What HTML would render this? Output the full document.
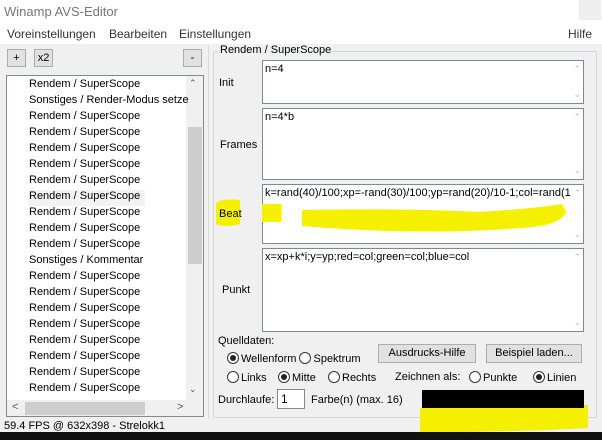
<!DOCTYPE html>
<html><head><meta charset="utf-8"><style>
*{box-sizing:border-box;margin:0;padding:0}
body{width:602px;height:440px;overflow:hidden;background:#f0f0f0;font-family:"Liberation Sans",sans-serif;font-size:11px;color:#000;position:relative}
.a{position:absolute}
.btn{position:absolute;background:#e1e1e1;border:1px solid #adadad;text-align:center;font-size:11px}
.ta{position:absolute;background:#fff;border:1px solid #828790;padding:2px 2px;font-size:11px;white-space:nowrap;overflow:hidden}
.sb{position:absolute;right:2px;top:3px;color:#c0c0c0;font-size:9px}
.sb2{position:absolute;right:2px;bottom:3px;color:#c0c0c0;font-size:9px}
.lbl{position:absolute;font-size:11px}
.item{position:absolute;left:29px;font-size:11px;white-space:nowrap}
.r{display:inline-block;width:12px;height:12px;border:1px solid #333;border-radius:50%;vertical-align:-2px;margin-right:2px;position:relative;background:#fff}
.r.on:after{content:"";position:absolute;left:2px;top:2px;width:6px;height:6px;border-radius:50%;background:#222}
</style></head><body>
<div class="a" style="left:0;top:0;width:602px;height:44px;background:#fff"></div>
<div class="a" style="left:4px;top:4px;font-size:13px;color:#777">Winamp AVS-Editor</div>
<div class="a" style="left:579px;top:0;width:22px;height:20px;background:#eee"></div>
<div class="a" style="left:7px;top:27px;font-size:12px;color:#333">Voreinstellungen</div>
<div class="a" style="left:109px;top:27px;font-size:12px;color:#333">Bearbeiten</div>
<div class="a" style="left:179px;top:27px;font-size:12px;color:#333">Einstellungen</div>
<div class="a" style="left:568px;top:27px;font-size:12px;color:#333">Hilfe</div>

<div class="btn" style="left:7px;top:49px;width:19px;height:18px;line-height:16px">+</div>
<div class="btn" style="left:34px;top:49px;width:19px;height:18px;line-height:16px">x2</div>
<div class="btn" style="left:183px;top:49px;width:19px;height:18px;line-height:16px">-</div>

<div class="a" style="left:6px;top:75px;width:198px;height:342px;background:#fff;border:1px solid #828790;overflow:hidden">
<div class="a" style="left:179px;top:0;width:17px;height:324px;background:#f0f0f0"></div>
<div class="a" style="left:181px;top:51px;width:14px;height:137px;background:#cdcdcd"></div>
<div class="a" style="left:182px;top:2px;font-size:9px;color:#555">&#8963;</div>
<div class="a" style="left:182px;top:308px;font-size:9px;color:#555">&#8964;</div>
<div class="a" style="left:0;top:324px;width:196px;height:17px;background:#f0f0f0"></div>
<div class="a" style="left:18px;top:326px;width:120px;height:13px;background:#cdcdcd"></div>
<div class="a" style="left:5px;top:325px;color:#555">&lt;</div>
<div class="a" style="left:170px;top:325px;color:#555">&gt;</div>
<div class="a" style="left:22px;top:114px;width:116px;height:16px;background:#f3f3f3"></div>
</div>
<div class="a" style="left:6px;top:76px">
<div class="item" style="top:2px;left:23px">Rendem / SuperScope</div>
<div class="item" style="top:18px;left:23px">Sonstiges / Render-Modus setze</div>
<div class="item" style="top:34px;left:23px">Rendem / SuperScope</div>
<div class="item" style="top:50px;left:23px">Rendem / SuperScope</div>
<div class="item" style="top:66px;left:23px">Rendem / SuperScope</div>
<div class="item" style="top:82px;left:23px">Rendem / SuperScope</div>
<div class="item" style="top:98px;left:23px">Rendem / SuperScope</div>
<div class="item" style="top:114px;left:23px">Rendem / SuperScope</div>
<div class="item" style="top:130px;left:23px">Rendem / SuperScope</div>
<div class="item" style="top:146px;left:23px">Rendem / SuperScope</div>
<div class="item" style="top:162px;left:23px">Rendem / SuperScope</div>
<div class="item" style="top:178px;left:23px">Sonstiges / Kommentar</div>
<div class="item" style="top:194px;left:23px">Rendem / SuperScope</div>
<div class="item" style="top:210px;left:23px">Rendem / SuperScope</div>
<div class="item" style="top:226px;left:23px">Rendem / SuperScope</div>
<div class="item" style="top:242px;left:23px">Rendem / SuperScope</div>
<div class="item" style="top:258px;left:23px">Rendem / SuperScope</div>
<div class="item" style="top:274px;left:23px">Rendem / SuperScope</div>
<div class="item" style="top:290px;left:23px">Rendem / SuperScope</div>
<div class="item" style="top:306px;left:23px">Rendem / SuperScope</div>
</div>
<div class="a" style="left:208px;top:46px;width:1px;height:372px;background:#d8d8d8"></div>
<div class="a" style="left:4px;top:420px;font-size:11px">59.4 FPS @ 632x398 - Strelokk1</div>
<div class="a" style="left:0;top:432px;width:602px;height:8px;background:#111"></div>

<div class="a" style="left:213px;top:51px;width:384px;height:367px;border:1px solid #d5d5d5;border-radius:2px"></div>
<div class="a" style="left:218px;top:44px;background:#f0f0f0;padding:0 2px;font-size:11px">Rendem / SuperScope</div>

<div class="lbl" style="left:219px;top:77px">Init</div>
<div class="ta" style="left:262px;top:60px;width:322px;height:44px">n=4<span class="sb">&#8963;</span><span class="sb2">&#8964;</span></div>
<div class="lbl" style="left:220px;top:139px">Frames</div>
<div class="ta" style="left:262px;top:108px;width:322px;height:72px">n=4*b<span class="sb">&#8963;</span><span class="sb2">&#8964;</span></div>
<div class="ta" style="left:262px;top:184px;width:322px;height:60px">k=rand(40)/100;xp=-rand(30)/100;yp=rand(20)/10-1;col=rand(1<span class="sb">&#8963;</span><span class="sb2">&#8964;</span></div>
<div class="ta" style="left:262px;top:248px;width:322px;height:84px">x=xp+k*i;y=yp;red=col;green=col;blue=col<span class="sb">&#8963;</span><span class="sb2">&#8964;</span></div>
<div class="lbl" style="left:222px;top:284px">Punkt</div>

<svg class="a" style="left:0;top:0" width="602" height="440">
<path d="M216 203 Q222 198 240 200 L240 224 Q225 228 216 224 Z" fill="#f4f000"/>
<path d="M302 210 Q400 208 480 212 Q540 208 562 204 L566 212 Q560 226 520 228 Q420 236 302 226 Z" fill="#f4f000"/>
<path d="M262 204 L281 204 L281 222 L262 222 Z" fill="#f4f000"/>
<path d="M420 408 Q500 404 588 405 L588 428 Q520 432 420 432 Z" fill="#f4f000"/>
</svg>
<div class="lbl" style="left:219px;top:208px">Beat</div>

<div class="lbl" style="left:218px;top:335px">Quelldaten:</div>
<div class="lbl" style="left:227px;top:352px"><span class="r on"></span>Wellenform <span class="r"></span>Spektrum</div>
<div class="btn" style="left:378px;top:344px;width:98px;height:19px;line-height:17px">Ausdrucks-Hilfe</div>
<div class="btn" style="left:486px;top:344px;width:96px;height:19px;line-height:17px">Beispiel laden...</div>
<div class="lbl" style="left:227px;top:371px"><span class="r"></span>Links</div>
<div class="lbl" style="left:278px;top:371px"><span class="r on"></span>Mitte</div>
<div class="lbl" style="left:328px;top:371px"><span class="r"></span>Rechts</div>
<div class="lbl" style="left:395px;top:371px">Zeichnen als:</div>
<div class="lbl" style="left:469px;top:371px"><span class="r"></span>Punkte</div>
<div class="lbl" style="left:533px;top:371px"><span class="r on"></span>Linien</div>
<div class="lbl" style="left:218px;top:394px">Durchlaufe:</div>
<div class="ta" style="left:277px;top:389px;width:28px;height:20px;font-size:12px;padding:2px 3px">1</div>
<div class="lbl" style="left:311px;top:394px">Farbe(n) (max. 16)</div>
<div class="a" style="left:422px;top:390px;width:162px;height:18px;background:#000"></div>
</body></html>
